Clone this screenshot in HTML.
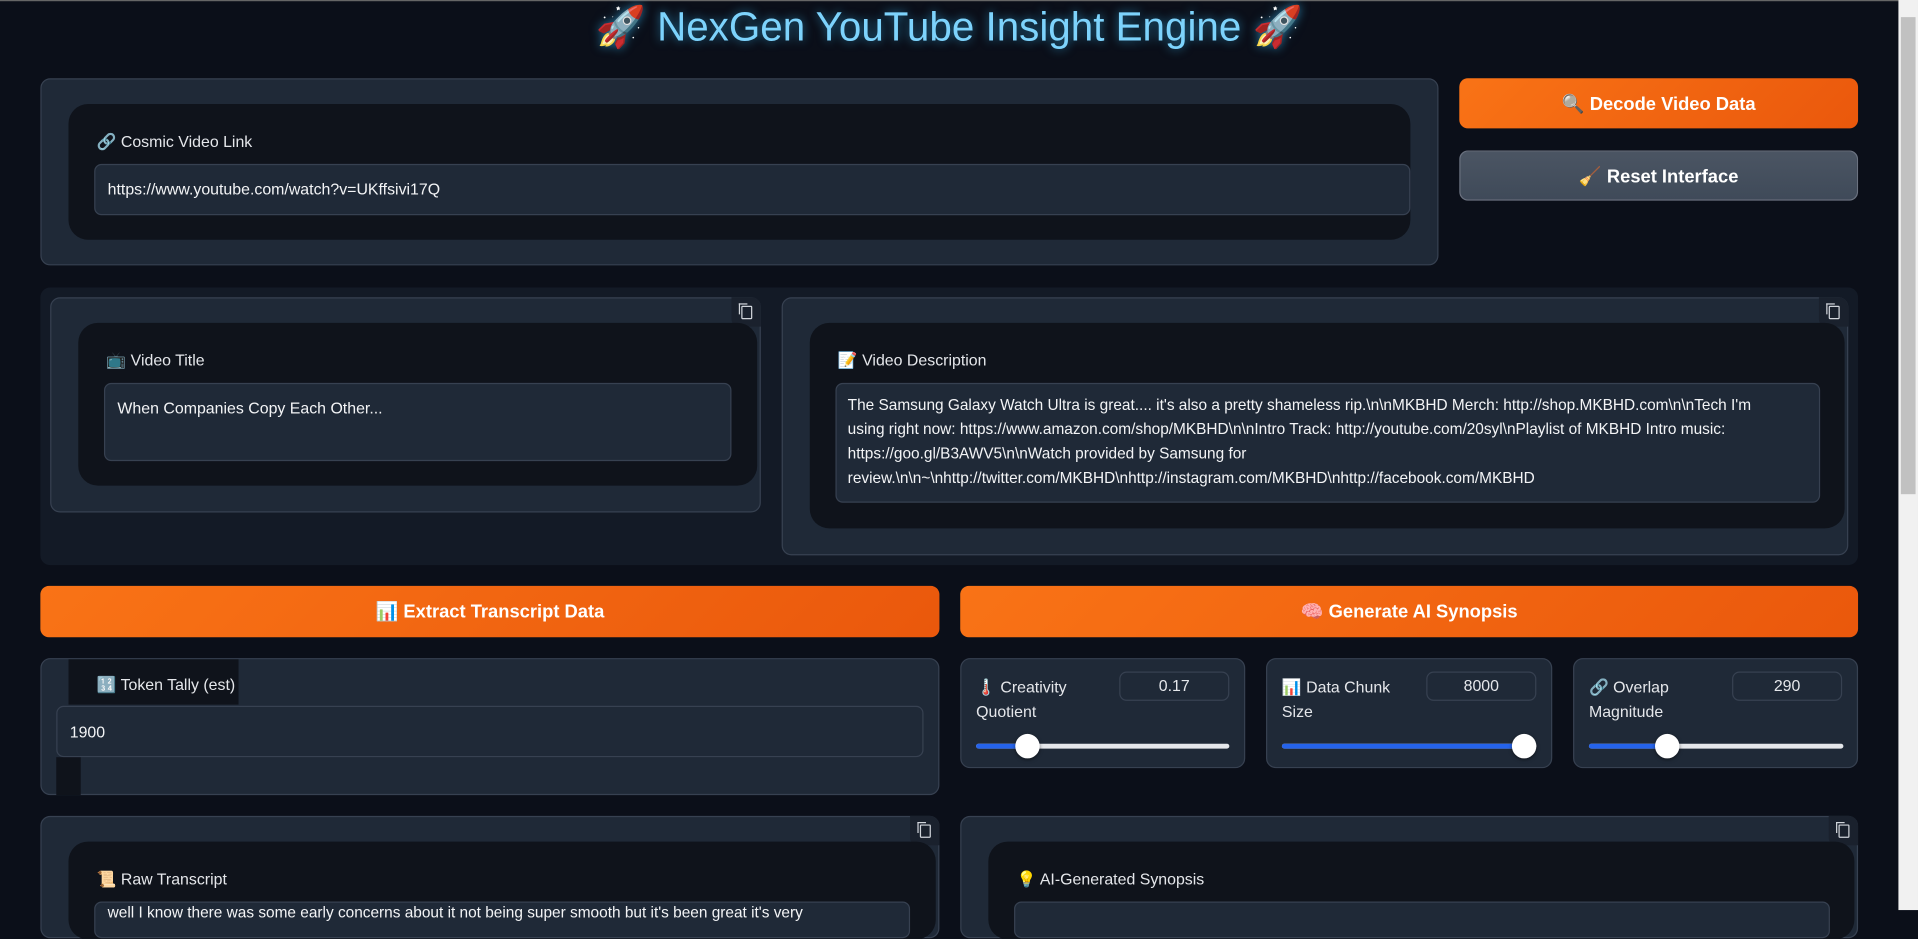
<!DOCTYPE html>
<html><head><meta charset="utf-8"><style>
*{box-sizing:border-box;margin:0;padding:0}
html,body{width:1918px;height:910px;overflow:hidden;background:#0b0f19}
#w{position:absolute;left:0;top:0;width:1568px;height:744px;transform:scale(1.22321);transform-origin:0 0;font-family:"Liberation Sans","Noto Sans CJK SC",sans-serif;color:#e5e7eb}
.a{position:absolute}
.card{position:absolute;background:#1f2937;border:1px solid #374151;border-radius:8px}
.inner{position:absolute;background:#0f131b;border-radius:16px}
.inp{position:absolute;background:#1f2937;border:1px solid #374151;border-radius:6px;font-size:13px;color:#f3f4f6}
.lbl{position:absolute;font-size:13px;color:#e5e7eb;white-space:nowrap}
.btn{position:absolute;border-radius:7px;background:linear-gradient(135deg,#f97316,#ea580c);color:#fff;font-weight:bold;font-size:15px;display:flex;align-items:center;justify-content:center}
.copy{position:absolute;width:24px;height:24px;background:#1a212d;border-radius:0 8px 0 6px}
.copy:after{content:"";position:absolute;left:8px;top:7px;width:7px;height:9px;border:1.3px solid #d1d5db;border-radius:1px}
.copy:before{content:"";position:absolute;left:6px;top:5px;width:6px;height:8px;border-top:1.3px solid #d1d5db;border-left:1.3px solid #d1d5db}
.sl{position:absolute;height:4px;background:#e5e7eb;border-radius:2px}
.sl b{position:absolute;left:0;top:0;height:4px;background:#2563eb;border-radius:2px}
.sl i{position:absolute;top:-8px;width:20px;height:20px;border-radius:50%;background:#fff;box-shadow:0 1px 3px rgba(0,0,0,.5)}
.num{position:absolute;width:90px;height:24px;border:1px solid #374151;border-radius:6px;background:#1f2937;font-size:13px;text-align:center;line-height:22px}
</style></head><body><div id="w">
<div class="a" style="left:0;top:0;width:1552px;height:1px;background:#666"></div>
<div class="a" style="left:1552px;top:0;width:16px;height:744px;background:#f1f1f1"></div>
<div class="a" style="left:1554px;top:14px;width:12px;height:390px;background:#c1c1c1"></div>
<div class="a" style="left:0;top:0;width:1552px;text-align:center;font-size:33px;color:#7dd3fc;line-height:44px;text-shadow:0 0 8px rgba(56,189,248,.6)">🚀 NexGen YouTube Insight Engine 🚀</div>

<div class="card" style="left:33px;top:64px;width:1143px;height:153px"></div>
<div class="inner" style="left:56px;top:85px;width:1097px;height:111px"></div>
<div class="lbl" style="left:79px;top:108px">🔗 Cosmic Video Link</div>
<div class="inp" style="left:77px;top:134px;width:1076px;height:42px;padding:12px 10px">https://www.youtube.com/watch?v=UKffsivi17Q</div>

<div class="btn" style="left:1193px;top:64px;width:326px;height:41px">🔍 Decode Video Data</div>
<div class="btn" style="left:1193px;top:123px;width:326px;height:41px;background:linear-gradient(180deg,#4b5563,#3f4a59);border:1px solid #6b7280">🧹 Reset Interface</div>

<div class="a" style="left:33px;top:235px;width:1486px;height:227px;background:#131a26;border-radius:8px"></div>
<div class="card" style="left:41px;top:243px;width:581px;height:176px"></div>
<div class="copy" style="left:598px;top:243px"></div>
<div class="inner" style="left:64px;top:264px;width:555px;height:133px"></div>
<div class="lbl" style="left:87px;top:287px">📺 Video Title</div>
<div class="inp" style="left:85px;top:313px;width:513px;height:64px;padding:12px 10px">When Companies Copy Each Other...</div>

<div class="card" style="left:639px;top:243px;width:872px;height:211px"></div>
<div class="copy" style="left:1487px;top:243px"></div>
<div class="inner" style="left:662px;top:264px;width:846px;height:168px"></div>
<div class="lbl" style="left:685px;top:287px">📝 Video Description</div>
<div class="inp" style="left:683px;top:313px;width:805px;height:98px;padding:7px 9px;line-height:20px;font-size:12.6px;white-space:nowrap;overflow:hidden">The Samsung Galaxy Watch Ultra is great.... it's also a pretty shameless rip.\n\nMKBHD Merch: http://shop.MKBHD.com\n\nTech I'm<br>using right now: https://www.amazon.com/shop/MKBHD\n\nIntro Track: http://youtube.com/20syl\nPlaylist of MKBHD Intro music:<br>https://goo.gl/B3AWV5\n\nWatch provided by Samsung for<br>review.\n\n~\nhttp://twitter.com/MKBHD\nhttp://instagram.com/MKBHD\nhttp://facebook.com/MKBHD</div>

<div class="btn" style="left:33px;top:479px;width:735px;height:42px">📊 Extract Transcript Data</div>
<div class="btn" style="left:785px;top:479px;width:734px;height:42px">🧠 Generate AI Synopsis</div>

<div class="card" style="left:33px;top:538px;width:735px;height:112px"></div>
<div class="a" style="left:56px;top:539px;width:139px;height:37px;background:#0f131b"></div>
<div class="a" style="left:46px;top:619px;width:20px;height:31px;background:#0f131b"></div>
<div class="lbl" style="left:79px;top:552px">🔢 Token Tally (est)</div>
<div class="inp" style="left:46px;top:577px;width:709px;height:42px;padding:13px 10px">1900</div>

<div class="card" style="left:785px;top:538px;width:233px;height:90px"></div>
<div class="lbl" style="left:798px;top:552px;line-height:20px">🌡️ Creativity<br>Quotient</div>
<div class="num" style="left:915px;top:549px">0.17</div>
<div class="sl" style="left:798px;top:608px;width:207px"><b style="width:42px"></b><i style="left:32px"></i></div>

<div class="card" style="left:1035px;top:538px;width:234px;height:90px"></div>
<div class="lbl" style="left:1048px;top:552px;line-height:20px">📊 Data Chunk<br>Size</div>
<div class="num" style="left:1166px;top:549px">8000</div>
<div class="sl" style="left:1048px;top:608px;width:208px"><b style="width:198px"></b><i style="left:188px"></i></div>

<div class="card" style="left:1286px;top:538px;width:233px;height:90px"></div>
<div class="lbl" style="left:1299px;top:552px;line-height:20px">🔗 Overlap<br>Magnitude</div>
<div class="num" style="left:1416px;top:549px">290</div>
<div class="sl" style="left:1299px;top:608px;width:208px"><b style="width:64px"></b><i style="left:54px"></i></div>

<div class="card" style="left:33px;top:667px;width:735px;height:100px"></div>
<div class="copy" style="left:744px;top:667px"></div>
<div class="inner" style="left:56px;top:688px;width:709px;height:80px"></div>
<div class="lbl" style="left:79px;top:711px">📜 Raw Transcript</div>
<div class="inp" style="left:77px;top:737px;width:667px;height:30px;padding:1px 10px;font-size:12.6px;white-space:nowrap;overflow:hidden">well I know there was some early concerns about it not being super smooth but it's been great it's very</div>

<div class="card" style="left:785px;top:667px;width:734px;height:100px"></div>
<div class="copy" style="left:1495px;top:667px"></div>
<div class="inner" style="left:808px;top:688px;width:708px;height:80px"></div>
<div class="lbl" style="left:831px;top:711px">💡 AI-Generated Synopsis</div>
<div class="inp" style="left:829px;top:737px;width:667px;height:30px"></div>
</div></body></html>
